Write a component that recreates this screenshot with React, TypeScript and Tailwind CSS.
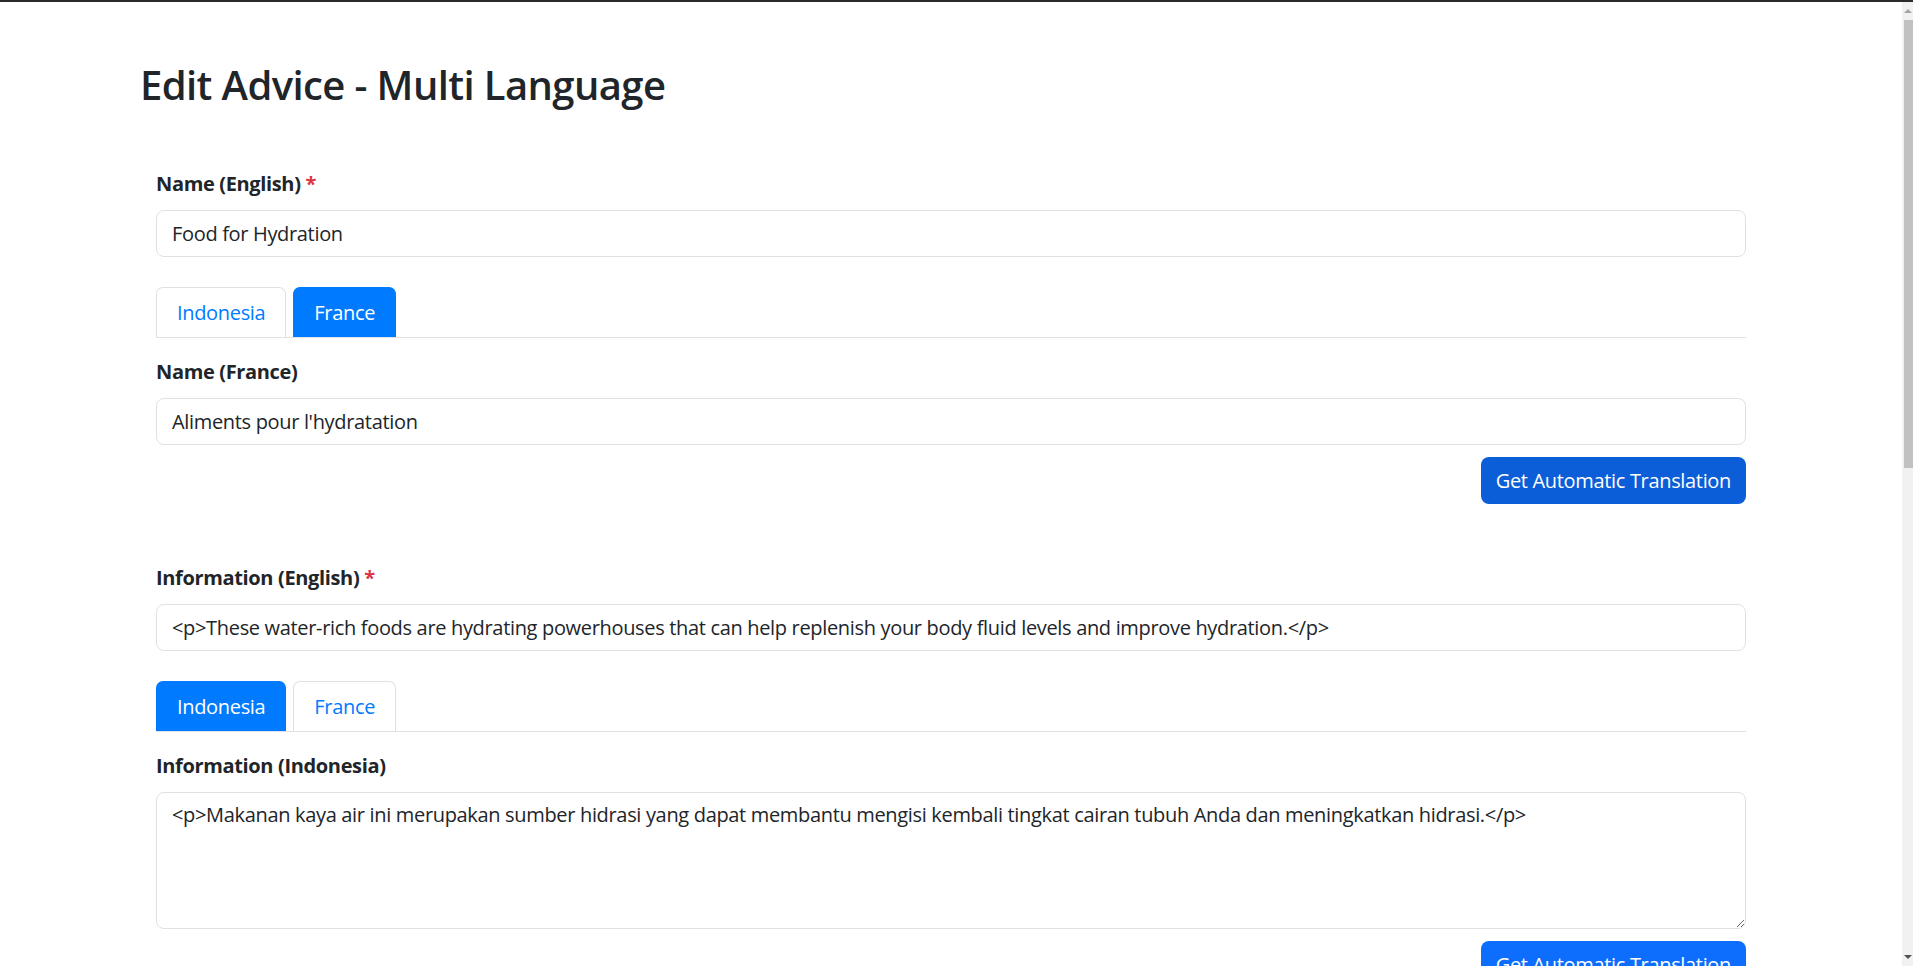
import React from 'react'

const font = { fontFamily: '"Open Sans", "Noto Sans", sans-serif' }

function Label({ text, required }: { text: string; required?: boolean }) {
  return (
    <label className="block text-[20px] leading-[30px] font-bold tracking-[-0.35px] text-[#212529] mb-[11px]">
      {text} {required && <span className="text-[#dc3545]">*</span>}
    </label>
  )
}

function Field({ value }: { value: string }) {
  return (
    <input
      readOnly
      value={value}
      className="block w-full h-[47px] px-[15px] text-[20px] tracking-[-0.33px] text-[#212529] bg-white border border-[#dee2e6] rounded-[8px] outline-none"
    />
  )
}

function Tabs({ active }: { active: 'id' | 'fr' }) {
  const on = 'bg-[#007bff] text-white border-[#007bff]'
  const off = 'bg-white text-[#007bff] border-[#dee2e6]'
  return (
    <div className="flex gap-[7px] border-b border-[#dee2e6] mt-[30px]">
      <button className={`h-[50px] px-[20px] text-[20px] tracking-[-0.33px] border border-b-0 rounded-t-[7px] ${active === 'id' ? on : off}`}>
        Indonesia
      </button>
      <button className={`h-[50px] px-[20px] text-[20px] tracking-[-0.33px] border border-b-0 rounded-t-[7px] ${active === 'fr' ? on : off}`}>
        France
      </button>
    </div>
  )
}

function TranslateButton({ hover }: { hover?: boolean }) {
  return (
    <div className="flex justify-end mt-[12px]">
      <button
        className={`h-[47px] px-[15px] text-[20px] tracking-[-0.33px] text-white rounded-[8px] ${hover ? 'bg-[#0b5ed7]' : 'bg-[#0d6efd]'}`}
      >
        Get Automatic Translation
      </button>
    </div>
  )
}

function Scrollbar() {
  return (
    <aside className="sticky top-0 h-[964px] w-[11px] shrink-0 bg-[#f1f1f1] flex flex-col items-end">
      <div className="h-[18px] w-full flex items-center justify-center">
        <div className="w-0 h-0 border-l-[4px] border-r-[4px] border-b-[4px] border-l-transparent border-r-transparent border-b-[#a3a3a3]" />
      </div>
      <div className="w-[9px] h-[448px] bg-[#c1c1c1]" />
      <div className="flex-1" />
      <div className="h-[18px] w-full flex items-center justify-center">
        <div className="w-0 h-0 border-l-[4px] border-r-[4px] border-t-[4px] border-l-transparent border-r-transparent border-t-[#505050]" />
      </div>
    </aside>
  )
}

export default function App() {
  return (
    <div className="min-h-screen bg-white border-t-2 border-[#2b2b2b] flex items-start" style={font}>
      <main className="flex-1 pl-[140px] pr-[156px] pt-[59px] pb-[200px]">
        <h1 className="text-[40px] leading-[48px] font-semibold tracking-[-0.6px] text-[#212529]">Edit Advice - Multi Language</h1>
        <form className="pl-[16px] mt-[60px]">
          <Label text="Name (English)" required />
          <Field value="Food for Hydration" />
          <Tabs active="fr" />
          <div className="mt-[19px]">
            <Label text="Name (France)" />
            <Field value="Aliments pour l'hydratation" />
          </div>
          <TranslateButton hover />

          <div className="mt-[59px]">
            <Label text="Information (English)" required />
            <Field value="<p>These water-rich foods are hydrating powerhouses that can help replenish your body fluid levels and improve hydration.</p>" />
          </div>
          <Tabs active="id" />
          <div className="mt-[19px]">
            <Label text="Information (Indonesia)" />
            <textarea
              readOnly
              value="<p>Makanan kaya air ini merupakan sumber hidrasi yang dapat membantu mengisi kembali tingkat cairan tubuh Anda dan meningkatkan hidrasi.</p>"
              className="block w-full h-[137px] px-[15px] py-[7px] text-[20px] leading-[30px] tracking-[-0.33px] text-[#212529] bg-white border border-[#dee2e6] rounded-[8px] outline-none"
            />
          </div>
          <TranslateButton />
        </form>
      </main>
      <Scrollbar />
    </div>
  )
}
